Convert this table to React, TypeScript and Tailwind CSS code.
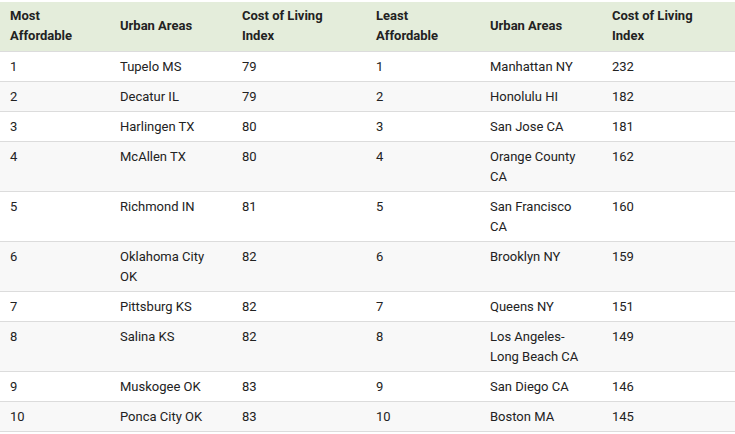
import React from "react";

const rows: [string, string, string, string, string, string][] = [
  ["1", "Tupelo MS", "79", "1", "Manhattan NY", "232"],
  ["2", "Decatur IL", "79", "2", "Honolulu HI", "182"],
  ["3", "Harlingen TX", "80", "3", "San Jose CA", "181"],
  ["4", "McAllen TX", "80", "4", "Orange County CA", "162"],
  ["5", "Richmond IN", "81", "5", "San Francisco CA", "160"],
  ["6", "Oklahoma City OK", "82", "6", "Brooklyn NY", "159"],
  ["7", "Pittsburg KS", "82", "7", "Queens NY", "151"],
  ["8", "Salina KS", "82", "8", "Los Angeles-Long Beach CA", "149"],
  ["9", "Muskogee OK", "83", "9", "San Diego CA", "146"],
  ["10", "Ponca City OK", "83", "10", "Boston MA", "145"],
];

const headers = [
  "Most Affordable",
  "Urban Areas",
  "Cost of Living Index",
  "Least Affordable",
  "Urban Areas",
  "Cost of Living Index",
];

const widths = ["w-[110px]", "w-[122px]", "w-[134px]", "w-[114px]", "w-[122px]", "w-[133px]"];

export default function App() {
  return (
    <div className="w-[735px] h-[434px] overflow-hidden bg-white pt-[2px] font-['Roboto',sans-serif] text-[13px] leading-[20px] text-[#222]">
      <table className="w-[735px] table-fixed border-collapse">
        <colgroup>
          {widths.map((w, i) => (
            <col key={i} className={w} />
          ))}
        </colgroup>
        <thead>
          <tr className="bg-[#e4eddb] border-b border-[#dcdcdc]">
            {headers.map((h, i) => (
              <th
                key={i}
                className="pl-[10px] pr-[15px] pt-[4px] pb-[5px] text-left align-middle font-bold"
              >
                {h}
              </th>
            ))}
          </tr>
        </thead>
        <tbody>
          {rows.map((r, i) => (
            <tr
              key={i}
              className={
                (i % 2 === 1 ? "bg-[#f8f8f8]" : "bg-white") +
                " border-b border-[#dcdcdc]"
              }
            >
              {r.map((c, j) => (
                <td
                  key={j}
                  className="pl-[10px] pr-[15px] pt-[5px] pb-[4px] align-top"
                >
                  {c}
                </td>
              ))}
            </tr>
          ))}
        </tbody>
      </table>
    </div>
  );
}
